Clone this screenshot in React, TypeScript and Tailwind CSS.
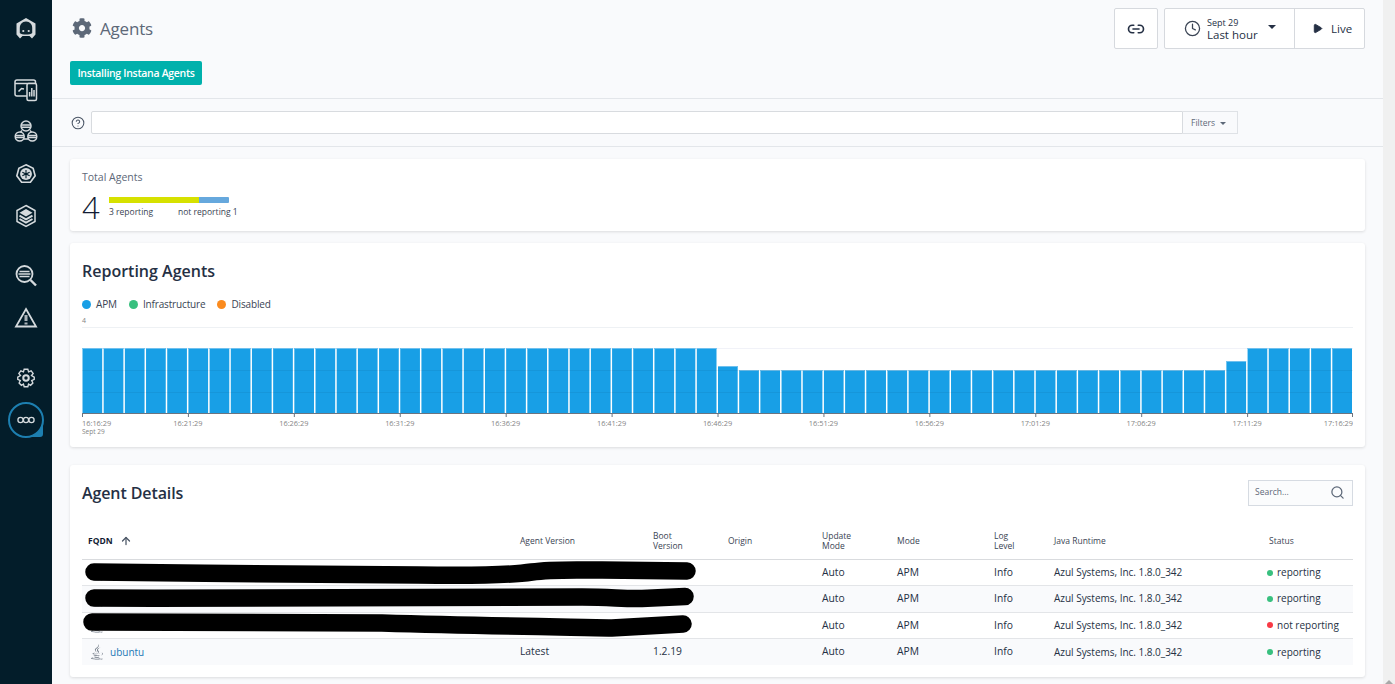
import { FaCog, FaJava } from "react-icons/fa";
import { Clock, Link2, Search, Play, CircleHelp, ArrowUp } from "lucide-react";

const columns = "grid grid-cols-[432px_133px_75px_94px_75px_97px_60px_215px_90px] items-center";
const font = "font-['Open_Sans',sans-serif]";

type Row = { fqdn?: string; status: string; reporting: boolean; version?: string; boot?: string };

const rows: Row[] = [
  { status: "reporting", reporting: true },
  { status: "reporting", reporting: true },
  { status: "not reporting", reporting: false },
  { fqdn: "ubuntu", status: "reporting", reporting: true, version: "Latest", boot: "1.2.19" },
];

const ticks = [
  "16:16:29", "16:21:29", "16:26:29", "16:31:29", "16:36:29", "16:41:29", "16:46:29",
  "16:51:29", "16:56:29", "17:01:29", "17:06:29", "17:11:29", "17:16:29",
];

// bar tops in px below the chart top (y=348 full, y=370 reduced)
const barTop = (i: number) => {
  if (i < 30 || i >= 55) return 27;
  if (i === 30) return 45;
  if (i === 54) return 40;
  return 49;
};

function SideIcon({ children, className }: { children: React.ReactNode; className: string }) {
  return (
    <svg viewBox="0 0 24 24" fill="none" stroke="#d5dadd" strokeWidth="1.5" className={className}>
      {children}
    </svg>
  );
}

function Sidebar() {
  return (
    <aside className="w-[52px] shrink-0 bg-[#031d2a] flex flex-col items-center">
      <SideIcon className="w-6 h-6 mt-[17px]">
        <path d="M12 1 L21.5 6.5 V17.5 L18 21.5 L15.5 19 H8.5 L6 21.5 L2.5 17.5 V6.5 Z" fill="#d5dadd" stroke="none" />
        <path d="M12 4.5 C8 4.5 5.8 7.5 5.8 11 V16 C8 18 16 18 18.2 16 V11 C18.2 7.5 16 4.5 12 4.5 Z" fill="#0c2531" stroke="none" />
        <circle cx="9.3" cy="14" r="1.1" fill="#d5dadd" stroke="none" />
        <circle cx="14.7" cy="14" r="1.1" fill="#d5dadd" stroke="none" />
      </SideIcon>
      <SideIcon className="w-6 h-6 mt-[37px]">
        <rect x="1" y="2" width="20.5" height="16" rx="2" />
        <path d="M1 5.5 H21.5" />
        <path d="M4.5 13.5 L7.5 10.5 L10 11" />
        <rect x="13" y="5.5" width="9.5" height="17" rx="1.5" fill="#031d2a" />
        <path d="M15.6 18.5 V14 M17.8 18.5 V10 M20 18.5 V12" />
      </SideIcon>
      <SideIcon className="w-6 h-6 mt-[17px]">
        <circle cx="12" cy="7" r="5" fill="#0c2531" />
        <path d="M7.2 6 H16.8 M7.2 8.2 H16.8" />
        <circle cx="5.7" cy="17.5" r="4.5" />
        <circle cx="18.3" cy="17.5" r="4.5" />
        <path d="M1.5 16.5 H10 M1.5 18.5 H10 M14 16.5 H22.5 M14 18.5 H22.5 M10 20 H14 M8 11.5 L6.5 13 M16 11.5 L17.5 13" />
      </SideIcon>
      <SideIcon className="w-[22px] h-[22px] mt-[20px]">
        <path d="M12 2 L19.8 5.7 L22 14 L16.8 21 H7.2 L2 14 L4.2 5.7 Z" strokeWidth="1.8" />
        <circle cx="12" cy="12" r="6.5" fill="#d5dadd" stroke="none" />
        <path d="M12 7.5 V16.5 M8 10 L16 14 M16 10 L8 14" stroke="#031d2a" strokeWidth="1.2" />
      </SideIcon>
      <SideIcon className="w-6 h-6 mt-[19px]">
        <path d="M12 1.5 L21 6.5 V17.5 L12 22.5 L3 17.5 V6.5 Z" />
        <path d="M12 5 L18.5 8.7 L12 12.4 L5.5 8.7 Z" fill="#d5dadd" stroke="none" />
        <path d="M5.5 11.7 L12 15.4 L18.5 11.7 M5.5 15 L12 18.7 L18.5 15" strokeWidth="2" />
      </SideIcon>
      <SideIcon className="w-6 h-6 mt-[36px]">
        <circle cx="10.5" cy="10" r="8" strokeWidth="1.8" />
        <path d="M5.5 7.5 H15.5 M4.5 10 H16.5 M5.5 12.5 H15.5" strokeWidth="1.6" />
        <path d="M16.5 16 L22 21.5" strokeWidth="2.4" />
      </SideIcon>
      <SideIcon className="w-6 h-6 mt-[18px]">
        <path d="M12 3 L22 20.5 H2 Z" strokeWidth="1.8" />
        <path d="M12 9 V15" stroke="#aab2b8" strokeWidth="3" />
        <path d="M12 16.5 V18.5" stroke="#aab2b8" strokeWidth="3" />
      </SideIcon>
      <SideIcon className="w-[22px] h-[22px] mt-[37px]">
        <path d="M10 2.5 H14 L14.8 5.3 L17.6 4.2 L19.8 7 L18 9.3 L21 11 V13.5 L18.2 14.8 L19.5 17.5 L17 20 L14.8 18.7 L14 21.5 H10 L9.2 18.7 L7 20 L4.5 17.5 L5.8 14.8 L3 13.5 V11 L6 9.3 L4.2 7 L6.4 4.2 L9.2 5.3 Z" />
        <circle cx="12" cy="12" r="3" strokeWidth="2.2" />
      </SideIcon>
      <svg viewBox="0 0 36 36" fill="none" className="w-9 h-9 mt-[13px]">
        <circle cx="18" cy="18" r="17" stroke="#1d7fb0" strokeWidth="2" />
        <path d="M35 18 V32 Q35 35 32 35 H18 A17 17 0 0 0 35 18 Z" fill="#1d7fb0" />
        <g stroke="#d5dadd" strokeWidth="1.3">
          <circle cx="12.5" cy="18" r="2.6" />
          <circle cx="18" cy="18" r="2.6" />
          <circle cx="23.5" cy="18" r="2.6" />
        </g>
      </svg>
    </aside>
  );
}

function Header() {
  return (
    <header className="h-[99px] border-b border-[#e3e6ea] pl-[18px] pr-[18px] flex justify-between">
      <div>
        <div className="flex gap-[8px] pt-[17px] pl-[2px] h-[61px] items-start">
          <FaCog className="text-[#5d6878] w-[20px] h-[20px] mt-[1px]" />
          <h1 className="text-[17px] leading-6 font-medium tracking-[-0.2px] text-[#5d6878]">Agents</h1>
        </div>
        <button className="block h-6 w-[132px] pt-[1px] rounded-[2px] bg-[#00b1ac] text-white text-[10.5px] font-semibold tracking-[-0.3px] whitespace-nowrap">
          Installing Instana Agents
        </button>
      </div>
      <div className="flex items-start gap-[6px] pt-2">
        <button className="w-[44px] h-[41px] border border-[#d6d9de] bg-white rounded-[2px] flex items-center justify-center">
          <Link2 className="w-[18px] h-[18px] text-[#253044]" strokeWidth={2.2} />
        </button>
        <div className="h-[41px] border border-[#d6d9de] bg-white rounded-[2px] flex">
          <div className="w-[130px] flex items-center pl-[19px] border-r border-[#d6d9de]">
            <Clock className="w-[17px] h-[17px] text-[#3a4454]" strokeWidth={1.8} />
            <div className="ml-[6px] pt-[1px] flex flex-col">
              <span className="text-[9px] leading-[11px] text-[#253044]">Sept 29</span>
              <span className="text-[11.5px] leading-[14px] font-medium text-[#253044]">Last hour</span>
            </div>
            <span className="ml-[10px] mb-[3px] border-x-[4px] border-t-[4px] border-x-transparent border-t-[#253044]" />
          </div>
          <div className="w-[69px] flex items-center pl-[17px] gap-[8px]">
            <Play className="w-[11px] h-[11px] text-[#253044] fill-[#253044]" />
            <span className="text-[11.5px] font-medium text-[#253044]">Live</span>
          </div>
        </div>
      </div>
    </header>
  );
}

function FilterBar() {
  return (
    <div className="h-[48px] border-b border-[#e3e6ea] pl-[19px] flex items-center">
      <CircleHelp className="w-[14px] h-[14px] text-[#4a5565]" strokeWidth={1.8} />
      <div className="ml-[6px] w-[1092px] h-[23px] bg-white border border-[#d8dbdf] rounded-l-[2px]" />
      <div className="w-[55px] h-[23px] pt-[1px] border border-l-0 border-[#dfe2e6] flex items-center pl-2 gap-[5px] text-[8.5px] text-[#5d6878]">
        Filters
        <span className="border-x-[3px] border-t-[3px] border-x-transparent border-t-[#5d6878]" />
      </div>
    </div>
  );
}

function Card({ className, children }: { className: string; children: React.ReactNode }) {
  return <section className={`bg-white rounded-[3px] shadow-[0_1px_3px_rgba(0,0,0,0.12)] ${className}`}>{children}</section>;
}

function TotalAgents() {
  return (
    <Card className="h-[72px] px-3 pt-[11px]">
      <div className="text-[10.5px] leading-[14px] text-[#5d6878]">Total Agents</div>
      <div className="flex mt-[5px]">
        <span className="text-[31px] leading-[36px] font-[350] text-[#121c33] w-[27px]">4</span>
        <div className="mt-[8px]">
          <div className="flex w-[120px] h-[6px]">
            <div className="w-[90px] bg-[#d6e100]" />
            <div className="w-[30px] bg-[#66a8dd] rounded-r-[1px]" />
          </div>
          <div className="flex text-[8.5px] leading-[12px] mt-[3px] text-[#3a4454] whitespace-nowrap">
            <span className="w-[69px]">3 reporting</span>
            <span>not reporting 1</span>
          </div>
        </div>
      </div>
    </Card>
  );
}

function Chart() {
  const barWidth = 1271 / 60;
  return (
    <svg viewBox="0 0 1271 116" className="w-[1271px] h-[116px] block">
      <path d="M0 6.5 H1271" stroke="#eef1f4" />
      <path d="M0 27.5 H1271" stroke="#f1f2f8" />
      {Array.from({ length: 60 }, (_, i) => (
        <g key={i}>
          <rect
            x={i * barWidth + 0.5}
            y={barTop(i)}
            width={barWidth - 1.5}
            height={92 - barTop(i)}
            fill="#189fe6"
          />
          <rect x={i * barWidth + 0.5} y={barTop(i)} width={barWidth - 1.5} height={1} fill="#6fc0ee" />
        </g>
      ))}
      <path d="M0 49.5 H1271 M0 71.5 H1271" stroke="#000" strokeOpacity="0.05" />
      <path d="M0 92.5 H1271" stroke="#6b7480" />
      {ticks.map((t, i) => {
        const x = i * 105.92;
        const anchor = i === 0 ? "start" : i === 12 ? "end" : "middle";
        return (
          <g key={t}>
            <path d={`M${Math.min(x + 0.5, 1270.5)} 92 V96`} stroke="#6b7480" />
            <text x={x} y={105} textAnchor={anchor} fontSize="7.4" fill="#858585">{t}</text>
          </g>
        );
      })}
      <text x={0} y={113} fontSize="6.5" fill="#858585">Sept 29</text>
    </svg>
  );
}

function LegendItem({ color, label }: { color: string; label: string }) {
  return (
    <span className="flex items-center gap-[5px]">
      <span className={`w-[9px] h-[9px] rounded-full ${color}`} />
      {label}
    </span>
  );
}

function ReportingAgents() {
  return (
    <Card className="h-[204px] px-3 pt-[16px]">
      <h2 className="text-[16px] leading-6 font-semibold text-[#253044]">Reporting Agents</h2>
      <div className="flex gap-[12px] mt-[14px] text-[10px] tracking-[-0.15px] leading-[14px] text-[#3a4454]">
        <LegendItem color="bg-[#189fe6]" label="APM" />
        <LegendItem color="bg-[#39c07f]" label="Infrastructure" />
        <LegendItem color="bg-[#fb8b1e]" label="Disabled" />
      </div>
      <div className="relative mt-[9px]">
        <span className="absolute left-0 top-[-4px] text-[7px] leading-[10px] text-[#858585]">4</span>
        <div className="pt-[1px]">
          <Chart />
        </div>
      </div>
    </Card>
  );
}

function Redactions() {
  return (
    <svg viewBox="0 0 640 110" fill="none" stroke="#000" strokeWidth="17.5" strokeLinecap="round" className="absolute left-0 top-0 w-[640px] h-[110px]">
      <path d="M12 12 C120 13 240 15 336 15 C400 16 430 15 450 12 C470 9 490 10 520 10 L605 11" />
      <path d="M12 38 C200 39 400 38 500 37 C530 37 540 39 560 38.5 L603 36.5" />
      <path d="M10 62 C150 62 250 62 300 63 C400 66 480 67 530 68 L601 64" />
    </svg>
  );
}

function AgentDetails() {
  return (
    <Card className="h-[212px] px-3">
      <div className="h-[60px] flex items-center justify-between pb-[4px]">
        <h2 className="text-[16px] font-semibold tracking-[-0.1px] text-[#253044]">Agent Details</h2>
        <div className="w-[105px] h-[26px] border border-[#d6dbe2] bg-[#fbfcfd] pl-[6px] pr-[7px] flex items-center justify-between text-[8.5px] text-[#5d6878] mt-[-1px]">
          Search...
          <Search className="w-[15px] h-[15px] text-[#5d6878]" strokeWidth={2} />
        </div>
      </div>
      <div className={`${columns} h-[35px] pb-[3px] border-b border-[#d9dbde] text-[8.5px] leading-[10px] text-[#3a4454] [&>*]:pl-[6px]`}>
        <div className="flex items-center gap-[7px] font-bold text-[#121c33]">
          FQDN
          <ArrowUp className="w-[12px] h-[12px] text-[#4a5565]" strokeWidth={2.5} />
        </div>
        <div>Agent Version</div>
        <div>Boot<br />Version</div>
        <div>Origin</div>
        <div>Update<br />Mode</div>
        <div>Mode</div>
        <div>Log<br />Level</div>
        <div>Java Runtime</div>
        <div>Status</div>
      </div>
      <div className="relative">
        {rows.map((row, i) => (
          <div
            key={i}
            className={`${columns} h-[26.3px] text-[10.3px] text-[#253044] [&>*]:pl-[6px] ${i < 3 ? "border-b border-[#e3e5e8]" : ""} ${i % 2 ? "bg-[#f9fafc]" : "bg-white"}`}
          >
            <div className="flex items-center gap-[5px]">
              <FaJava className="w-4 h-4 text-[#6b7480] ml-[1px]" />
              <span className="text-[10px] text-[#2378b5]">{row.fqdn}</span>
            </div>
            <div>{row.version}</div>
            <div>{row.boot}</div>
            <div />
            <div>Auto</div>
            <div>APM</div>
            <div>Info</div>
            <div className="whitespace-nowrap text-[10px] tracking-[-0.02px]">Azul Systems, Inc. 1.8.0_342</div>
            <div className="flex items-center gap-[4px] whitespace-nowrap text-[10px] !pl-[4px]">
              <span className={`w-[6px] h-[6px] rounded-full ${row.reporting ? "bg-[#39c07f]" : "bg-[#f83a46]"}`} />
              {row.status}
            </div>
          </div>
        ))}
        <Redactions />
      </div>
    </Card>
  );
}

export default function App() {
  return (
    <div className={`flex h-[684px] overflow-hidden bg-[#f9fafc] ${font}`}>
      <Sidebar />
      <main className="flex-1 min-w-0">
        <Header />
        <FilterBar />
        <div className="pl-[18px] pr-[18px] pt-[12px] flex flex-col gap-3">
          <TotalAgents />
          <ReportingAgents />
          <div className="mt-[6px]">
            <AgentDetails />
          </div>
        </div>
      </main>
      <div className="w-3 shrink-0 bg-[#f0f0f0] flex justify-center pt-[4px]">
        <span className="border-x-[4px] border-b-[4px] border-x-transparent border-b-[#a8a8a8]" />
      </div>
    </div>
  );
}
